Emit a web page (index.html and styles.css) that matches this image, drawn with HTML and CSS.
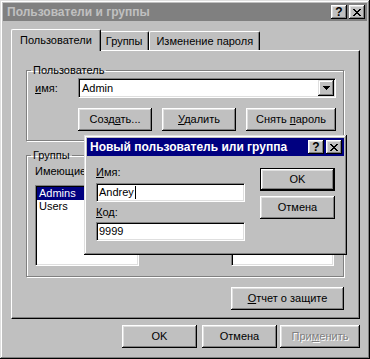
FILE: index.html
```html
<!DOCTYPE html>
<html lang="ru">
<head>
<meta charset="utf-8">
<title>Пользователи и группы</title>
<link rel="stylesheet" href="styles.css">
</head>
<body>
<div class="win">
  <div class="titlebar inactive">
    <span class="title">Пользователи и группы</span>
    <div class="tbtns">
      <button class="tb">?</button>
      <button class="tb"><svg width="8" height="7" viewBox="0 0 8 7" shape-rendering="crispEdges"><path d="M0 0h2v1H0zM6 0h2v1H6zM1 1h2v1H1zM5 1h2v1H5zM2 2h4v1H2zM3 3h2v1H3zM2 4h4v1H2zM1 5h2v1H1zM5 5h2v1H5zM0 6h2v1H0zM6 6h2v1H6z" fill="#000"/></svg></button>
    </div>
  </div>
  <div class="main">
    <div class="tabs">
      <div class="tab active">Пользователи</div>
      <div class="tab">Группы</div>
      <div class="tab">Изменение пароля</div>
    </div>
    <div class="panel">
      <fieldset class="group g1">
        <legend>Пользователь</legend>
        <div class="field-row">
          <span class="lbl"><u>и</u>мя:</span>
          <div class="combo">
            <span class="combo-text">Admin</span>
            <span class="drop"><svg width="7" height="4" viewBox="0 0 7 4" shape-rendering="crispEdges"><path d="M0 0h7v1H0zM1 1h5v1H1zM2 2h3v1H2zM3 3h1v1H3z" fill="#000"/></svg></span>
          </div>
        </div>
        <div class="btn-row">
          <button class="btn w74">Созд<u>а</u>ть...</button>
          <button class="btn w74"><u>У</u>далить</button>
          <button class="btn w90">Снять <u>п</u>ароль</button>
        </div>
      </fieldset>
      <fieldset class="group g2">
        <legend>Группы</legend>
        <div class="lists">
          <div class="col">
            <div class="cap">Имеющие</div>
            <div class="list">
              <div class="item sel">Admins</div>
              <div class="item">Users</div>
            </div>
          </div>
          <div class="col">
            <div class="cap"></div>
            <div class="list list-r"></div>
          </div>
        </div>
      </fieldset>
      <div class="report-row">
        <button class="btn w113"><u>О</u>тчет о защите</button>
      </div>
    </div>
    <div class="footer">
      <button class="btn w75">OK</button>
      <button class="btn w75">Отмена</button>
      <button class="btn w80 disabled">При<u>м</u>енить</button>
    </div>
  </div>

  <div class="dlg">
    <div class="titlebar active">
      <span class="title">Новый пользователь или группа</span>
      <div class="tbtns">
        <button class="tb">?</button>
        <button class="tb"><svg width="8" height="7" viewBox="0 0 8 7" shape-rendering="crispEdges"><path d="M0 0h2v1H0zM6 0h2v1H6zM1 1h2v1H1zM5 1h2v1H5zM2 2h4v1H2zM3 3h2v1H3zM2 4h4v1H2zM1 5h2v1H1zM5 5h2v1H5zM0 6h2v1H0zM6 6h2v1H6z" fill="#000"/></svg></button>
      </div>
    </div>
    <div class="dlg-body">
      <div class="dlg-fields">
        <span class="dlbl"><u>И</u>мя:</span>
        <div class="input"><span>Andrey</span><span class="caret"></span></div>
        <span class="dlbl l2"><u>К</u>од:</span>
        <div class="input i2"><span>9999</span></div>
      </div>
      <div class="dlg-btns">
        <button class="btn w75 default">OK</button>
        <button class="btn w75">Отмена</button>
      </div>
    </div>
  </div>
</div>
</body>
</html>
```

FILE: styles.css
```css
* { box-sizing: border-box; }
html, body { margin: 0; padding: 0; background: #c0c0c0; }
body {
  font: 11px "Liberation Sans", Arial, sans-serif;
  color: #000;
  width: 370px;
  height: 359px;
  overflow: hidden;
}
u { text-decoration: underline; text-underline-offset: 1px; }

.win {
  position: relative;
  width: 370px;
  height: 359px;
  background: #c0c0c0;
  padding: 3px;
  box-shadow: inset -1px -1px #000, inset 1px 1px #dfdfdf, inset -2px -2px #808080, inset 2px 2px #fff;
  display: flex;
  flex-direction: column;
}

.titlebar {
  flex: none;
  height: 18px;
  display: flex;
  align-items: center;
  padding: 0 2px 0 4px;
  font-weight: bold;
  font-size: 12px;
}
.titlebar.inactive { background: #808080; color: #c0c0c0; }
.titlebar.active { background: #000080; color: #fff; padding-left: 3px; }
.title { flex: 1; white-space: nowrap; overflow: hidden; line-height: 14px; }
.tbtns { display: flex; gap: 2px; }
.tb {
  width: 16px;
  height: 14px;
  padding: 0;
  border: 0;
  background: #c0c0c0;
  box-shadow: inset -1px -1px #000, inset 1px 1px #fff, inset -2px -2px #808080, inset 2px 2px #dfdfdf;
  display: flex;
  align-items: center;
  justify-content: center;
  font: bold 12px "Liberation Sans", Arial, sans-serif;
  color: #000;
  line-height: 12px;
}

.main {
  flex: 1;
  display: flex;
  flex-direction: column;
  padding: 8px 7px 0 8px;
}

.tabs {
  display: flex;
  align-items: flex-end;
  height: 21px;
  padding-left: 2px;
}
.tab {
  height: 19px;
  padding: 0 6px;
  display: flex;
  align-items: center;
  border: 1px solid;
  border-color: #fff #000 transparent #fff;
  border-bottom: 0;
  border-radius: 2px 2px 0 0;
  box-shadow: inset -1px 0 #808080;
  background: #c0c0c0;
  white-space: nowrap;
  line-height: 13px;
}
.tab.active {
  height: 22px;
  margin: 0 -2px -1px -2px;
  padding: 0 8px 1px;
  position: relative;
  z-index: 1;
}

.panel {
  height: 269px;
  border: 1px solid;
  border-color: #fff #000 #000 #fff;
  box-shadow: inset -1px -1px #808080;
  padding: 0 15px 0 14px;
  display: flex;
  flex-direction: column;
}

.group {
  margin: 0;
  min-width: 0;
  border: 1px solid #808080;
  box-shadow: 1px 1px #fff, inset 1px 1px #fff;
}
.group legend {
  padding: 0 2px;
  margin-left: -4px;
  height: 13px;
  line-height: 13px;
}
.g1 { margin-top: 13px; padding: 1px 7px 9px 8px; }
.g2 { margin-top: 8px; padding: 3px 9px 10px 8px; }

.field-row { display: flex; align-items: center; height: 20px; }
.lbl { width: 43px; line-height: 13px; }
.combo {
  flex: 1;
  height: 20px;
  display: flex;
  align-items: center;
  justify-content: space-between;
  background: #fff;
  border: 1px solid;
  border-color: #808080 #fff #fff #808080;
  box-shadow: inset 1px 1px #000, inset -1px -1px #dfdfdf;
  padding: 1px 1px 1px 3px;
}
.combo-text { line-height: 13px; }
.drop {
  width: 16px;
  height: 16px;
  background: #c0c0c0;
  box-shadow: inset -1px -1px #000, inset 1px 1px #dfdfdf, inset -2px -2px #808080, inset 2px 2px #fff;
  display: flex;
  align-items: center;
  justify-content: center;
}

.btn-row {
  display: flex;
  justify-content: space-between;
  margin: 10px 0 0 43px;
}
.btn {
  height: 23px;
  padding: 0;
  border: 0;
  background: #c0c0c0;
  box-shadow: inset -1px -1px #000, inset 1px 1px #fff, inset -2px -2px #808080, inset 2px 2px #dfdfdf;
  font: 11px "Liberation Sans", Arial, sans-serif;
  color: #000;
  line-height: 13px;
  white-space: nowrap;
}
.btn.default {
  border: 1px solid #000;
}
.btn.disabled { color: #808080; text-shadow: 1px 1px #fff; }
.w74 { width: 74px; }
.w75 { width: 75px; }
.w80 { width: 80px; }
.w90 { width: 90px; }
.w113 { width: 113px; }

.lists { display: flex; justify-content: space-between; }
.col { display: flex; flex-direction: column; }
.cap { line-height: 13px; height: 13px; margin-bottom: 7px; white-space: nowrap; }
.list {
  width: 104px;
  height: 81px;
  background: #fff;
  border: 1px solid;
  border-color: #808080 #fff #fff #808080;
  box-shadow: inset 1px 1px #000, inset -1px -1px #dfdfdf;
  padding: 1px;
}
.list-r { width: 103px; }
.item { height: 13px; line-height: 13px; padding-left: 2px; }
.item.sel { background: #000080; color: #fff; }

.report-row { display: flex; justify-content: flex-end; margin-top: 10px; }

.footer {
  display: flex;
  justify-content: flex-end;
  gap: 5px;
  margin-top: 6px;
}
.footer .disabled { margin-left: -2px; }

.dlg {
  position: absolute;
  left: 84px;
  top: 135px;
  width: 263px;
  height: 120px;
  padding: 3px;
  background: #c0c0c0;
  box-shadow: inset -1px -1px #000, inset 1px 1px #dfdfdf, inset -2px -2px #808080, inset 2px 2px #fff;
  display: flex;
  flex-direction: column;
  z-index: 5;
}
.dlg-body {
  flex: 1;
  display: flex;
  gap: 15px;
  padding: 0 0 0 9px;
}
.dlg-fields { width: 149px; display: flex; flex-direction: column; padding-top: 10px; }
.dlbl { line-height: 13px; height: 13px; }
.dlbl.l2 { margin-top: 4px; }
.input {
  margin-top: 4px;
  height: 19px;
  background: #fff;
  border: 1px solid;
  border-color: #808080 #fff #fff #808080;
  box-shadow: inset 1px 1px #000, inset -1px -1px #dfdfdf;
  padding: 0 2px 0 2px;
  display: flex;
  align-items: center;
  line-height: 13px;
}
.input.i2 { margin-top: 3px; }
.caret { width: 1px; height: 13px; background: #000; margin-left: 1px; }
.dlg-btns { display: flex; flex-direction: column; gap: 5px; padding-top: 12px; }
```
